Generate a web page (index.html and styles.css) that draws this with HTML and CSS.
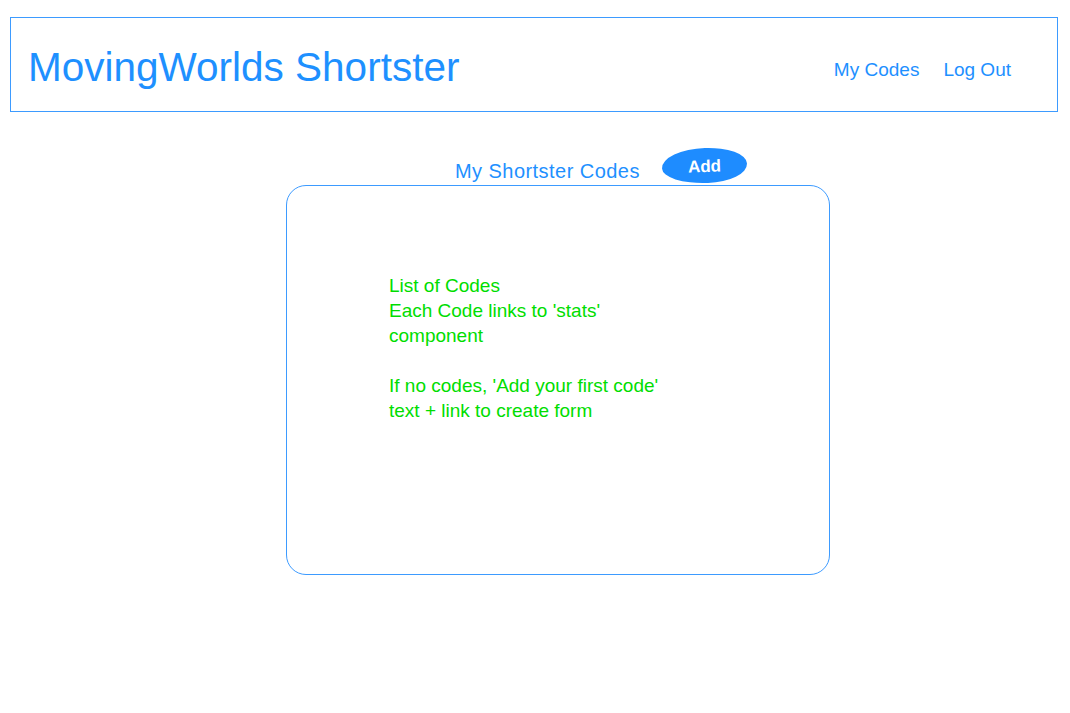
FILE: index.html
```html
<!DOCTYPE html>
<html lang="en">
<head>
<meta charset="utf-8">
<title>MovingWorlds Shortster</title>
<link rel="stylesheet" href="styles.css">
</head>
<body>
<header class="site-header">
  <h1 class="brand">MovingWorlds Shortster</h1>
  <nav class="nav">
    <a class="nav-link" href="#">My Codes</a>
    <a class="nav-link" href="#">Log Out</a>
  </nav>
</header>
<main class="main">
  <div class="codes-head">
    <h2 class="codes-title">My Shortster Codes</h2>
    <button class="add-btn" type="button">Add</button>
  </div>
  <section class="codes-card">
    <p class="note">List of Codes<br>Each Code links to 'stats' component</p>
    <p class="note">If no codes, 'Add your first code'<br>text + link to create form</p>
  </section>
</main>
</body>
</html>
```

FILE: styles.css
```css
html, body {
  margin: 0;
  padding: 0;
  background: #ffffff;
}

body {
  font-family: "Liberation Sans", Arial, Helvetica, sans-serif;
  color: #1e90ff;
}

.site-header {
  margin: 17px 12px 0 10px;
  border: 1px solid #3d9bff;
  padding: 26px 46px 21px 17px;
  display: flex;
  justify-content: space-between;
  align-items: flex-start;
}

.brand {
  margin: 0;
  font-size: 40.5px;
  line-height: 46px;
  font-weight: normal;
  color: #1e90ff;
}

.nav {
  margin-top: 15px;
  display: flex;
  gap: 24px;
}

.nav-link {
  font-size: 19px;
  line-height: 22px;
  color: #1e90ff;
  text-decoration: none;
}

.main {
  margin-left: 286px;
  width: 544px;
}

.codes-head {
  margin-top: 36px;
  padding-left: 169px;
  display: flex;
  align-items: flex-start;
  gap: 22px;
}

.codes-title {
  margin: 11px 0 0 0;
  font-size: 20px;
  line-height: 24px;
  letter-spacing: 0.45px;
  font-weight: normal;
  color: #1e90ff;
}

.add-btn {
  width: 85px;
  height: 35px;
  padding: 2px 0 0 0;
  border: none;
  border-radius: 44px 42px 40px 45px / 19px 17px 18px 16px;
  background: #1e8cff;
  color: #ffffff;
  font-family: "Liberation Sans", Arial, Helvetica, sans-serif;
  font-size: 17px;
  font-weight: bold;
  line-height: 33px;
  transform: rotate(-2deg);
  cursor: pointer;
}

.codes-card {
  margin-top: 2px;
  box-sizing: border-box;
  height: 390px;
  border: 1px solid #3d9bff;
  border-radius: 20px;
  padding: 87px 0 0 102px;
}

.note {
  margin: 0 0 25px 0;
  width: 290px;
  font-size: 19px;
  line-height: 25px;
  color: #00dd00;
}
```
